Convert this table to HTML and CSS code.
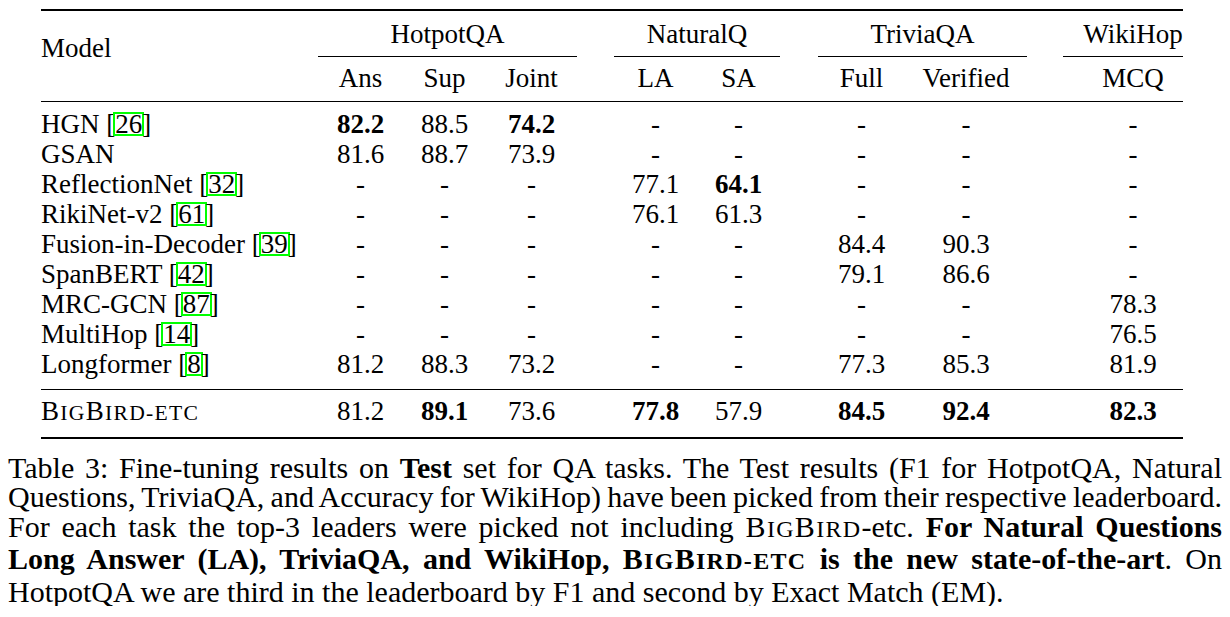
FILE: index.html
```html
<!DOCTYPE html>
<html lang="en">
<head>
<meta charset="utf-8">
<title>Table 3: Fine-tuning results on Test set for QA tasks</title>
<link rel="stylesheet" href="styles.css">
</head>
<body>
<main class="page">
  <div class="tbl">
    <div class="cols head">
      <span class="model">Model</span>
      <span class="grp g-hot">HotpotQA</span>
      <span class="grp g-nq">NaturalQ</span>
      <span class="grp g-tq">TriviaQA</span>
      <span class="grp g-wh wh">WikiHop</span>
      <span class="sub c2">Ans</span>
      <span class="sub c3">Sup</span>
      <span class="sub c4">Joint</span>
      <span class="sub c6">LA</span>
      <span class="sub c7">SA</span>
      <span class="sub c9">Full</span>
      <span class="sub c10">Verified</span>
      <span class="sub c12 wh">MCQ</span>
    </div>
    <div class="body">
      <div class="cols tr">
        <span class="m">HGN [<span class="cite">26</span>]</span>
        <span class="n b">82.2</span><span class="n">88.5</span><span class="n b">74.2</span><span></span>
        <span class="n">-</span><span class="n">-</span><span></span>
        <span class="n">-</span><span class="n">-</span><span></span>
        <span class="n wh">-</span>
      </div>
      <div class="cols tr">
        <span class="m">GSAN</span>
        <span class="n">81.6</span><span class="n">88.7</span><span class="n">73.9</span><span></span>
        <span class="n">-</span><span class="n">-</span><span></span>
        <span class="n">-</span><span class="n">-</span><span></span>
        <span class="n wh">-</span>
      </div>
      <div class="cols tr">
        <span class="m">ReflectionNet [<span class="cite">32</span>]</span>
        <span class="n">-</span><span class="n">-</span><span class="n">-</span><span></span>
        <span class="n">77.1</span><span class="n b">64.1</span><span></span>
        <span class="n">-</span><span class="n">-</span><span></span>
        <span class="n wh">-</span>
      </div>
      <div class="cols tr">
        <span class="m">RikiNet-v2 [<span class="cite">61</span>]</span>
        <span class="n">-</span><span class="n">-</span><span class="n">-</span><span></span>
        <span class="n">76.1</span><span class="n">61.3</span><span></span>
        <span class="n">-</span><span class="n">-</span><span></span>
        <span class="n wh">-</span>
      </div>
      <div class="cols tr">
        <span class="m">Fusion-in-Decoder [<span class="cite">39</span>]</span>
        <span class="n">-</span><span class="n">-</span><span class="n">-</span><span></span>
        <span class="n">-</span><span class="n">-</span><span></span>
        <span class="n">84.4</span><span class="n">90.3</span><span></span>
        <span class="n wh">-</span>
      </div>
      <div class="cols tr">
        <span class="m">SpanBERT [<span class="cite">42</span>]</span>
        <span class="n">-</span><span class="n">-</span><span class="n">-</span><span></span>
        <span class="n">-</span><span class="n">-</span><span></span>
        <span class="n">79.1</span><span class="n">86.6</span><span></span>
        <span class="n wh">-</span>
      </div>
      <div class="cols tr">
        <span class="m">MRC-GCN [<span class="cite">87</span>]</span>
        <span class="n">-</span><span class="n">-</span><span class="n">-</span><span></span>
        <span class="n">-</span><span class="n">-</span><span></span>
        <span class="n">-</span><span class="n">-</span><span></span>
        <span class="n wh">78.3</span>
      </div>
      <div class="cols tr">
        <span class="m">MultiHop [<span class="cite">14</span>]</span>
        <span class="n">-</span><span class="n">-</span><span class="n">-</span><span></span>
        <span class="n">-</span><span class="n">-</span><span></span>
        <span class="n">-</span><span class="n">-</span><span></span>
        <span class="n wh">76.5</span>
      </div>
      <div class="cols tr">
        <span class="m">Longformer [<span class="cite">8</span>]</span>
        <span class="n">81.2</span><span class="n">88.3</span><span class="n">73.2</span><span></span>
        <span class="n">-</span><span class="n">-</span><span></span>
        <span class="n">77.3</span><span class="n">85.3</span><span></span>
        <span class="n wh">81.9</span>
      </div>
      <div class="cols tr ours">
        <span class="m sc">B<span class="s">ig</span>B<span class="s">ird-etc</span></span>
        <span class="n">81.2</span><span class="n b">89.1</span><span class="n">73.6</span><span></span>
        <span class="n b">77.8</span><span class="n">57.9</span><span></span>
        <span class="n b">84.5</span><span class="n b">92.4</span><span></span>
        <span class="n wh b">82.3</span>
      </div>
    </div>
  </div>
  <div class="caption">
    <div class="cl">Table 3: Fine-tuning results on <b>Test</b> set for QA tasks. The Test results (F1 for HotpotQA, Natural</div>
    <div class="cl">Questions, TriviaQA, and Accuracy for WikiHop) have been picked from their respective leaderboard.</div>
    <div class="cl">For each task the top-3 leaders were picked not including <span class="sc">B<span class="s">ig</span>B<span class="s">ird</span></span>-etc. <b>For Natural Questions</b></div>
    <div class="cl"><b>Long Answer (LA), TriviaQA, and WikiHop, <span class="sc">B<span class="s">ig</span>B<span class="s">ird-etc</span></span> is the new state-of-the-art</b>. On</div>
    <div class="cl end">HotpotQA we are third in the leaderboard by F1 and second by Exact Match (EM).</div>
  </div>
</main>
</body>
</html>
```
FILE: styles.css
```css
html, body {
  margin: 0;
  background: #ffffff;
}

body {
  color: #000000;
  font-family: "Liberation Serif", "Times New Roman", serif;
}

.page {
  padding: 9px 8px 0 8px;
}

.tbl {
  margin-left: 33px;
  width: 1142px;
  border-top: 2px solid #000;
  border-bottom: 2px solid #000;
  padding-bottom: 9px;
  font-size: 27px;
  line-height: 30px;
}

.cols {
  display: grid;
  grid-template-columns: 277px 85px 83px 91px 37px 83px 83px 38px 87px 122px 36px 120px;
}

.head {
  border-bottom: 1px solid #000;
}

.model {
  grid-column: 1;
  grid-row: 1 / 3;
  padding-top: 22px;
}

.grp {
  grid-row: 1;
  text-align: center;
  padding-top: 8px;
  padding-bottom: 7px;
  border-bottom: 1px solid #000;
}

.g-hot { grid-column: 2 / 5; }
.g-nq { grid-column: 6 / 8; }
.g-tq { grid-column: 9 / 11; }
.g-wh { grid-column: 12 / 13; }

.sub {
  grid-row: 2;
  text-align: center;
  padding-top: 6px;
  padding-bottom: 8px;
}

.c2 { grid-column: 2; }
.c3 { grid-column: 3; }
.c4 { grid-column: 4; }
.c6 { grid-column: 6; }
.c7 { grid-column: 7; }
.c9 { grid-column: 9; }
.c10 { grid-column: 10; }
.c12 { grid-column: 12; }

.wh {
  padding-left: 20px;
}

.body {
  padding-top: 7px;
}

.tr .m {
  white-space: nowrap;
}

.n {
  text-align: center;
}

.b {
  font-weight: 700;
}

.ours {
  margin-top: 10px;
  border-top: 1px solid #000;
  padding-top: 6px;
}

.sc {
  letter-spacing: 1.3px;
}

.sc .s {
  font-size: 0.8em;
  text-transform: uppercase;
}

.cite {
  display: inline-block;
  border: 2px solid #00ff00;
  line-height: 20px;
  margin: 0 -2px;
}

.caption {
  margin-top: 14px;
  font-size: 30px;
  line-height: 29.4px;
}

.cl {
  white-space: nowrap;
  word-spacing: -2px;
  text-align: justify;
  text-align-last: justify;
}

.cl.end {
  word-spacing: 0;
  text-align-last: left;
}
```
